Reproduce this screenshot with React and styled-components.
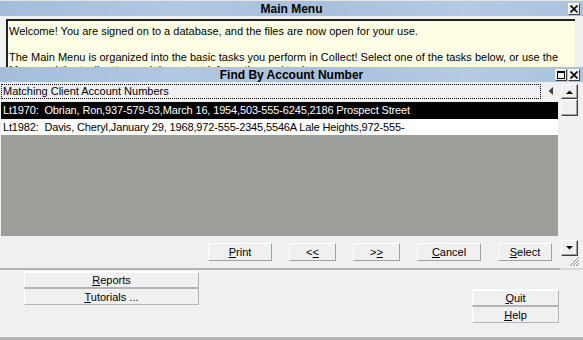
import styled, { createGlobalStyle } from "styled-components";

const GlobalStyle = createGlobalStyle`
  body {
    margin: 0;
    background: #f0f0f0;
    font-family: "Liberation Sans", Arial, sans-serif;
    font-size: 11px;
    color: #000;
  }
`;

const rows = [
  "Lt1970:  Obrian, Ron,937-579-63,March 16, 1954,503-555-6245,2186 Prospect Street",
  "Lt1982:  Davis, Cheryl,January 29, 1968,972-555-2345,5546A Lale Heights,972-555-",
];

const Screen = styled.div`
  width: 583px;
  height: 340px;
  overflow: hidden;
  display: flex;
  flex-direction: column;
  background: #f0f0f0;
  border-top: 1px solid #e4e4e4;
  box-sizing: border-box;
`;

const TitleBar = styled.div`
  height: ${(p) => p.$h}px;
  flex: none;
  display: grid;
  grid-template-columns: 1fr auto 1fr;
  align-items: center;
  background: linear-gradient(90deg, #a3bddb 0%, #b1c8e2 30%, #a8c0dd 55%, #b5cbe4 80%, #aac2de 100%);
  font-weight: bold;
  font-size: 12px;
`;

const TitleText = styled.span`
  grid-column: 2;
`;

const TitleButtons = styled.div`
  grid-column: 3;
  justify-self: end;
  display: flex;
  gap: 1px;
  padding-right: 3px;
`;

const BoxButton = styled.div`
  width: 12px;
  height: 12px;
  box-sizing: border-box;
  background: #f0f0f0;
  border: 1px solid;
  border-color: #fff #404040 #404040 #fff;
  display: flex;
  align-items: center;
  justify-content: center;
`;

const MessageArea = styled.div`
  height: 51px;
  flex: none;
  padding: 3px 8px 0 6px;
  box-sizing: border-box;
  overflow: hidden;
`;

const MessageBox = styled.div`
  background: #ffffe6;
  border-top: 2px solid #202020;
  border-left: 2px solid #202020;
  padding: 4px 0 0 1px;
  height: 60px;
  line-height: 13px;
  p {
    margin: 0 0 13px 0;
  }
`;

const FindWindow = styled.div`
  flex: none;
  display: flex;
  flex-direction: column;
  height: 201px;
`;

const FindBody = styled.div`
  flex: 1;
  display: flex;
`;

const ListColumn = styled.div`
  width: 558px;
  display: flex;
  flex-direction: column;
`;

const HeaderRow = styled.div`
  display: flex;
  align-items: center;
  height: 16px;
  padding-top: 1px;
`;

const HeaderLabel = styled.div`
  width: 540px;
  height: 15px;
  box-sizing: border-box;
  border: 1px dotted #000;
  margin-left: 1px;
  padding-left: 1px;
  line-height: 13px;
`;

const HeaderArrow = styled.div`
  flex: 1;
  display: flex;
  justify-content: center;
  padding-left: 2px;
`;

const Rows = styled.div`
  margin-top: 3px;
  background: #9c9e9a;
  height: 134px;
  margin-left: 1px;
`;

const Row = styled.div`
  height: 16.5px;
  line-height: 16px;
  padding-left: 2px;
  white-space: pre;
  letter-spacing: -0.15px;
  overflow: hidden;
  background: ${(p) => (p.$selected ? "#000" : "#fff")};
  color: ${(p) => (p.$selected ? "#fff" : "#000")};
`;

const ButtonBar = styled.div`
  display: flex;
  align-items: center;
  padding: 7px 0 0 208px;
  gap: 17px;
`;

const Button = styled.div`
  width: ${(p) => p.$w}px;
  height: 18px;
  box-sizing: border-box;
  display: flex;
  align-items: center;
  justify-content: center;
  border: 1px solid;
  border-color: #fff #a0a0a0 #a0a0a0 #fff;
  background: #f0f0f0;
`;

const ScrollColumn = styled.div`
  width: 25px;
  display: flex;
  flex-direction: column;
  padding: 2px 0 0 3px;
  box-sizing: border-box;
`;

const ScrollButton = styled.div`
  width: 17px;
  height: ${(p) => p.$h}px;
  flex: none;
  box-sizing: border-box;
  border: 1px solid;
  border-color: #fff #404040 #404040 #fff;
  box-shadow: inset -1px -1px 0 #a0a0a0;
  background: #f0f0f0;
  display: flex;
  align-items: center;
  justify-content: center;
`;

const ScrollTrack = styled.div`
  flex: 1;
`;

const Grip = styled.div`
  display: flex;
  justify-content: flex-end;
  padding: 0 3px 1px 0;
`;

const Divider = styled.div`
  flex: none;
  height: 2px;
  background: linear-gradient(90deg, #b4b4b4 0, #b4b4b4 560px, #d8d8d8 560px);
`;

const Bottom = styled.div`
  flex: 1;
  display: flex;
  justify-content: space-between;
  align-items: flex-start;
  border-bottom: 3px solid #b4b4b4;
`;

const ButtonStack = styled.div`
  display: flex;
  flex-direction: column;
  margin: ${(p) => p.$m};
  width: ${(p) => p.$w}px;
`;

const MenuButton = styled.div`
  height: 17px;
  box-sizing: border-box;
  display: flex;
  align-items: center;
  justify-content: center;
  border: 1px solid;
  border-color: #fff #b4b4b4 #b4b4b4 #fff;
  border-top: ${(p) => (p.$first ? "2px solid #fff" : "1px solid #fff")};
  background: #f0f0f0;
  & + & {
    border-top-color: #b4b4b4;
  }
`;

const CloseIcon = () => (
  <svg width="8" height="8" viewBox="0 0 8 8">
    <path d="M0.5 0.5 L7.5 7.5 M7.5 0.5 L0.5 7.5" stroke="#000" strokeWidth="1.6" />
  </svg>
);

const MaxIcon = () => (
  <svg width="8" height="8" viewBox="0 0 8 8">
    <rect x="0.5" y="0.5" width="7" height="7" fill="none" stroke="#000" />
    <rect x="0" y="0" width="8" height="2" fill="#000" />
  </svg>
);

const Triangle = ({ dir }) => {
  if (dir === "left") {
    return (
      <svg width="6" height="8" viewBox="0 0 6 8">
        <path d="M5 0 L5 8 L0.5 4 Z" fill="#404040" />
      </svg>
    );
  }
  return (
    <svg width="7" height="4" viewBox="0 0 7 4">
      <path d={dir === "up" ? "M0 4 L7 4 L3.5 0.5 Z" : "M0 0 L7 0 L3.5 3.5 Z"} fill="#000" />
    </svg>
  );
};

export default function App() {
  return (
    <>
      <GlobalStyle />
      <Screen>
        <TitleBar $h={15}>
          <TitleText>Main Menu</TitleText>
          <TitleButtons>
            <BoxButton>
              <CloseIcon />
            </BoxButton>
          </TitleButtons>
        </TitleBar>
        <MessageArea>
          <MessageBox>
            <p>Welcome! You are signed on to a database, and the files are now open for your use.</p>
            <p>
              The Main Menu is organized into the basic tasks you perform in Collect! Select one of the tasks below, or use the
              Menu and the toolbar to reach important information and tools.
            </p>
          </MessageBox>
        </MessageArea>
        <FindWindow>
          <TitleBar $h={15}>
            <TitleText>Find By Account Number</TitleText>
            <TitleButtons>
              <BoxButton>
                <MaxIcon />
              </BoxButton>
              <BoxButton>
                <CloseIcon />
              </BoxButton>
            </TitleButtons>
          </TitleBar>
          <FindBody>
            <ListColumn>
              <HeaderRow>
                <HeaderLabel>Matching Client Account Numbers</HeaderLabel>
                <HeaderArrow>
                  <Triangle dir="left" />
                </HeaderArrow>
              </HeaderRow>
              <Rows>
                {rows.map((r, i) => (
                  <Row key={i} $selected={i === 0}>
                    {r}
                  </Row>
                ))}
              </Rows>
              <ButtonBar>
                <Button $w={64}>
                  <span><u>P</u>rint</span>
                </Button>
                <Button $w={47}>
                  <span>&lt;<u>&lt;</u></span>
                </Button>
                <Button $w={47}>
                  <span>&gt;<u>&gt;</u></span>
                </Button>
                <Button $w={64}>
                  <span><u>C</u>ancel</span>
                </Button>
                <Button $w={54}>
                  <span><u>S</u>elect</span>
                </Button>
              </ButtonBar>
            </ListColumn>
            <ScrollColumn>
              <ScrollButton $h={15}>
                <Triangle dir="up" />
              </ScrollButton>
              <ScrollButton $h={17} />
              <ScrollTrack />
              <ScrollButton $h={16}>
                <Triangle dir="down" />
              </ScrollButton>
              <Grip>
                <svg width="11" height="11" viewBox="0 0 11 11">
                  <path d="M10 1 L1 10 M10 4 L4 10 M10 7 L7 10" stroke="#909090" strokeWidth="1" />
                  <path d="M10 2 L2 10 M10 5 L5 10 M10 8 L8 10" stroke="#fff" strokeWidth="1" />
                </svg>
              </Grip>
            </ScrollColumn>
          </FindBody>
        </FindWindow>
        <Divider />
        <Bottom>
          <ButtonStack $w={175} $m="1px 0 0 24px">
            <MenuButton $first>
              <span><u>R</u>eports</span>
            </MenuButton>
            <MenuButton>
              <span><u>T</u>utorials ...</span>
            </MenuButton>
          </ButtonStack>
          <ButtonStack $w={87} $m="19px 24px 0 0">
            <MenuButton $first>
              <span><u>Q</u>uit</span>
            </MenuButton>
            <MenuButton>
              <span><u>H</u>elp</span>
            </MenuButton>
          </ButtonStack>
        </Bottom>
      </Screen>
    </>
  );
}
